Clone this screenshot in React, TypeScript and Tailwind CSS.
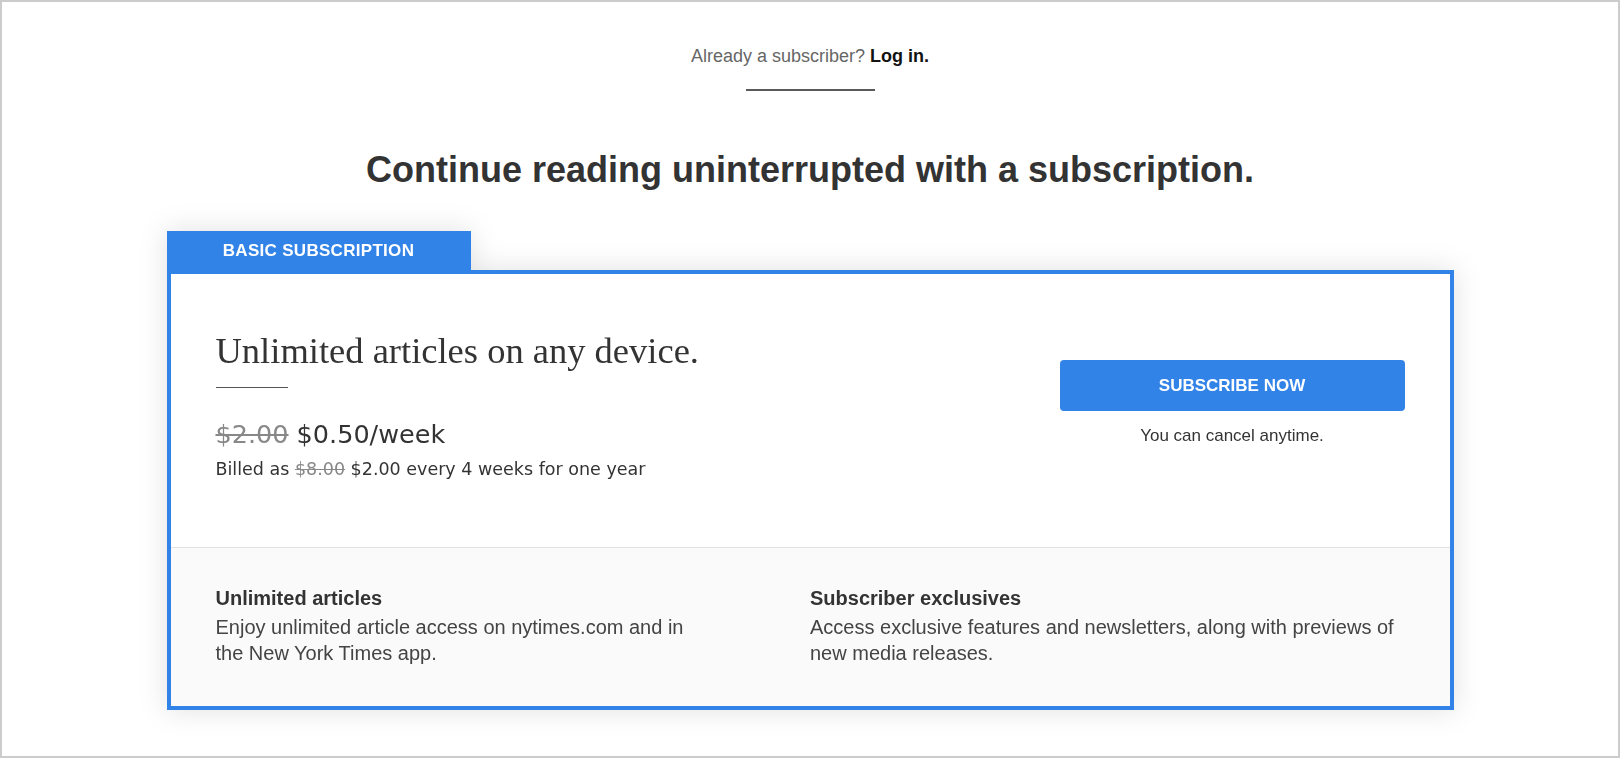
import React from 'react';

const SANS = { fontFamily: '"Liberation Sans", Arial, sans-serif' };

const Feature: React.FC<{ title: string; body: string; bodyWidth: string }> = ({ title, body, bodyWidth }) => (
  <div>
    <h3 className="text-[20px] leading-[26px] font-bold text-[#333]">{title}</h3>
    <p className={`mt-[3px] text-[20px] leading-[26px] text-[#444] ${bodyWidth}`}>{body}</p>
  </div>
);

const App: React.FC = () => {
  return (
    <div className="w-[1620px] h-[758px] border-2 border-[#cccccc] bg-white overflow-hidden" style={SANS}>
      <div className="flex flex-col items-center pt-[42px]">
        <p className="text-[18px] leading-[24px] text-[#666]">
          Already a subscriber? <a href="#" className="font-bold text-[#121212]">Log in.</a>
        </p>
        <div className="mt-[21px] w-[129px] h-[2px] bg-[#5a5a5a]" />

        <h1 className="mt-[58px] text-[36px] leading-[42px] font-bold text-[#333]">
          Continue reading uninterrupted with a subscription.
        </h1>

        <div className="mt-[40px] w-[1287px] drop-shadow-[0_0_14px_rgba(0,0,0,0.12)]">
          <div className="w-[304px] h-[39px] bg-[#3283e8] flex items-center justify-center">
            <span className="text-[17px] font-bold text-white tracking-[0.3px]">BASIC SUBSCRIPTION</span>
          </div>

          <div className="border-4 border-[#3283e8] bg-white">
            <div className="px-[45px] pt-[55px] pb-[66px] flex justify-between">
              <div>
                <h2
                  className="text-[36.5px] leading-[44px] text-[#333]"
                  style={{ fontFamily: '"Liberation Serif", "Times New Roman", serif' }}
                >
                  Unlimited articles on any device.
                </h2>
                <div className="mt-[14px] w-[72px] h-px bg-[#555]" />
                <div style={{ fontFamily: '"DejaVu Sans", sans-serif' }}>
                  <p className="mt-[30px] text-[25.5px] leading-[32px] text-[#333]">
                    <span className="line-through text-[#888]">$2.00</span> $0.50/week
                  </p>
                  <p className="mt-[7px] text-[17.5px] leading-[24px] text-[#333]">
                    Billed as <span className="line-through text-[#888]">$8.00</span> $2.00 every 4 weeks for one year
                  </p>
                </div>
              </div>

              <div className="mt-[31px] w-[345px] flex flex-col items-center">
                <button className="w-full h-[51px] rounded-[4px] bg-[#3283e8] text-white text-[17px] font-bold">
                  SUBSCRIBE NOW
                </button>
                <p className="mt-[13px] text-[17px] leading-[24px] text-[#333]">You can cancel anytime.</p>
              </div>
            </div>

            <div className="border-t border-[#e2e2e2] bg-[#fafafa] px-[45px] pt-[37px] pb-[40px] grid grid-cols-2">
              <Feature
                title="Unlimited articles"
                body="Enjoy unlimited article access on nytimes.com and in the New York Times app."
                bodyWidth="max-w-[480px]"
              />
              <Feature
                title="Subscriber exclusives"
                body="Access exclusive features and newsletters, along with previews of new media releases."
                bodyWidth="max-w-[592px]"
              />
            </div>
          </div>
        </div>
      </div>
    </div>
  );
};

export default App;
